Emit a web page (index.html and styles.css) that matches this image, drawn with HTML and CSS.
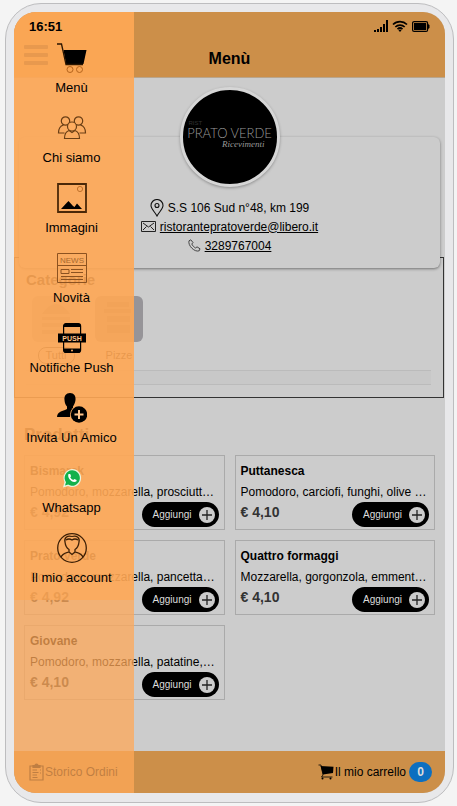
FILE: index.html
```
<!DOCTYPE html>
<html lang="it">
<head>
  <meta charset="UTF-8" />
  <meta name="viewport" content="width=device-width, initial-scale=1.0"/>
  <title>Menù</title>
  <link rel="stylesheet" href="styles.css">
</head>
<body>
  <div class="phone">
    <div class="screen">

      <header class="topbar">
        <div class="status">
          <span>16:51</span>
          <div class="status-icons">
            <svg width="14" height="12" viewBox="0 0 14 12"><path d="M0 10h2v2H0zM3 9h2v3H3zM6 7h2v5H6zM9 4h2v8H9zM12 0h2v12h-2z"/></svg>
            <svg width="16" height="12" viewBox="0 0 16 12"><path d="M1 4.500a10 10 0 0 1 14 0M3.300 7a6.700 6.700 0 0 1 9.400 0M5.500 9.200a3.600 3.600 0 0 1 5 0" fill="none" stroke="#000" stroke-width="1.700"/><path d="M6.500 10.200a2.200 2.200 0 0 1 3 0L8 12z"/></svg>
            <svg width="18" height="12" viewBox="0 0 18 12"><rect x=".6" y="1.600" width="15" height="9.800" rx="1.500" fill="none" stroke="#000" stroke-width="1.200"/><path d="M2 3h12.200v7H2zM16 4l1.500 1v3L16 9z"/></svg>
          </div>
        </div>
        <div class="title-row">
          <button class="hamburger" aria-label="Apri menu">
            <span></span><span></span><span></span>
          </button>
          <h1>Menù</h1>
        </div>
      </header>

      <main>
        <section class="info">
          <div class="logo">
            <span class="logo-top">RIST</span>
            <span class="logo-name">PRATO VERDE</span>
            <span class="logo-sub">Ricevimenti</span>
          </div>
          <p class="contact">
            <svg width="14" height="18" viewBox="0 0 14 18" fill="none" stroke="#111" stroke-width="1.100"><path d="M7 17C5 13 1 10 1 6.500a6 6 0 0 1 12 0C13 10 9 13 7 17z"/><circle cx="7" cy="6.500" r="2"/></svg>
            S.S 106 Sud n°48, km 199
          </p>
          <p class="contact">
            <svg width="15" height="11" viewBox="0 0 15 11" fill="none" stroke="#222"><path d="M.5.5h14v10H.5zM2 2l5.500 4L13 2M2 9l3.500-3.500M13 9L9.500 5.500"/></svg>
            <a href="mailto:ristorantepratoverde@libero.it">ristorantepratoverde@libero.it</a>
          </p>
          <p class="contact">
            <svg width="13" height="13" viewBox="0 0 13 13" fill="none" stroke="#444"><path d="M1 1.800L2.800.8 5 3.500 3.800 5c.6 1.600 2.200 3.200 3.900 4L9 7.800l3 2-.8 2C6.500 13.500-.3 6.500 1 1.800z"/></svg>
            <a href="tel:3289767004">3289767004</a>
          </p>
        </section>

        <section class="categories">
          <h2>Categorie</h2>
          <div class="category-list">
            <button class="category selected">
              <svg width="48" height="46" viewBox="0 0 48 46"><rect width="48" height="46" rx="6" fill="#aaa"/><path d="M10 18q14-20 28 0zM10 21h28v3H10zM10 27h28v4H10zM10 34h28v4H10z" fill="#888"/></svg>
              <span>Tutti</span>
            </button>
            <button class="category">
              <svg width="48" height="46" viewBox="0 0 48 46"><rect width="48" height="46" rx="6" fill="#969498"/><path d="M12 6h22v5H12zM9 13h27v4H9zM12 20h23v6H12zM12 29h23v8H12z" fill="#777"/></svg>
              <span>Pizze</span>
            </button>
          </div>
          <div class="category-strip"></div>
        </section>

        <section class="products">
          <h2>Prodotti</h2>
          <div class="product-grid">
            <article class="product">
              <h3>Bismarck</h3>
              <p>Pomodoro, mozzarella, prosciutto cotto, uovo</p>
              <div class="buy">
                <strong>€ 4,92</strong>
                <button class="add">Aggiungi <svg width="16" height="16" viewBox="0 0 16 16"><circle cx="8" cy="8" r="8" fill="#ccc"/><path d="M8 3v10M3 8h10" stroke="#222" stroke-width="1.300"/></svg></button>
              </div>
            </article>
            <article class="product">
              <h3>Puttanesca</h3>
              <p>Pomodoro, carciofi, funghi, olive nere, capperi</p>
              <div class="buy">
                <strong>€ 4,10</strong>
                <button class="add">Aggiungi <svg width="16" height="16" viewBox="0 0 16 16"><circle cx="8" cy="8" r="8" fill="#ccc"/><path d="M8 3v10M3 8h10" stroke="#222" stroke-width="1.300"/></svg></button>
              </div>
            </article>
            <article class="product">
              <h3>Prato verde</h3>
              <p>Pomodoro, mozzarella, pancetta, rucola</p>
              <div class="buy">
                <strong>€ 4,92</strong>
                <button class="add">Aggiungi <svg width="16" height="16" viewBox="0 0 16 16"><circle cx="8" cy="8" r="8" fill="#ccc"/><path d="M8 3v10M3 8h10" stroke="#222" stroke-width="1.300"/></svg></button>
              </div>
            </article>
            <article class="product">
              <h3>Quattro formaggi</h3>
              <p>Mozzarella, gorgonzola, emmental, grana</p>
              <div class="buy">
                <strong>€ 4,10</strong>
                <button class="add">Aggiungi <svg width="16" height="16" viewBox="0 0 16 16"><circle cx="8" cy="8" r="8" fill="#ccc"/><path d="M8 3v10M3 8h10" stroke="#222" stroke-width="1.300"/></svg></button>
              </div>
            </article>
            <article class="product">
              <h3>Giovane</h3>
              <p>Pomodoro, mozzarella, patatine, wurstel</p>
              <div class="buy">
                <strong>€ 4,10</strong>
                <button class="add">Aggiungi <svg width="16" height="16" viewBox="0 0 16 16"><circle cx="8" cy="8" r="8" fill="#ccc"/><path d="M8 3v10M3 8h10" stroke="#222" stroke-width="1.300"/></svg></button>
              </div>
            </article>
          </div>
        </section>
      </main>

      <footer class="bottombar">
        <a href="#ordini">
          <svg width="15" height="18" viewBox="0 0 15 18" fill="none" stroke="#000" stroke-width="1.200"><path d="M4 3H1v14h13V3h-3M3.500 7H8M3.500 9.500h6M3.500 12H8M3.500 14.500h5M11 7h1M11 10h1"/><path d="M4 4.500V2.500h2C6 .5 9 .5 9 2.500h2v2z" fill="#000"/></svg>
          Storico Ordini
        </a>
        <a href="#carrello">
          <svg width="16" height="16" viewBox="0 0 16 16"><path d="M2.500 2l13 .8-.5 6.200L5 10.500z"/><path d="M.5 1H3l2 10-1.500 2h11" fill="none" stroke="#000" stroke-width=".8"/><circle cx="4.500" cy="14.500" r="1"/><circle cx="12.500" cy="14.500" r="1"/></svg>
          Il mio carrello
          <span class="badge">0</span>
        </a>
      </footer>

      <!-- Menu laterale -->
      <nav class="drawer">
        <ul>
          <li><a href="#menu">
            <svg width="30" height="30" viewBox="0 0 30 30"><path d="M6.500 7h23L26.500 21H9z"/><path d="M0 1h4.500L9 21.500h17" fill="none" stroke="#2a1500" stroke-width="1.300"/><g fill="none" stroke="#b5651d"><circle cx="13" cy="26.500" r="3"/><circle cx="22.500" cy="26.500" r="3"/></g></svg>
            Menù
          </a></li>
          <li><a href="#chi-siamo">
            <svg width="30" height="30" viewBox="0 0 30 30" fill="none" stroke="#6b3f15" stroke-width="1.200"><circle cx="8.500" cy="8" r="4.200"/><circle cx="21.500" cy="8" r="4.200"/><path d="M6.500 12C3 13 1.500 16 1.500 20h6M23.500 12c3.500 1 5 4 5 8h-6"/><circle cx="15" cy="13.500" r="4.500" fill="#ffad60"/><path d="M12 17.500c-3 1-4.500 4-4.500 8h15c0-4-1.500-7-4.500-8l-3 2z"/></svg>
            Chi siamo
          </a></li>
          <li><a href="#immagini">
            <svg width="30" height="30" viewBox="0 0 30 30"><path d="M1 1h28v28H1z" fill="none" stroke="#4a2808" stroke-width="1.800"/><path d="M4 26l6-6.500 1.500-1.500 4.500 5 1.500 1 2.500-3.500 5 5.500z"/><circle cx="23" cy="6" r="2.600" fill="none" stroke="#c0722c"/></svg>
            Immagini
          </a></li>
          <li><a href="#novita">
            <svg width="30" height="30" viewBox="0 0 30 30" fill="none" stroke="#8c5220"><path d="M.5.500h29v29H.5zM.5 12.500h29M4 16.500h8v4H4zM14 16.500h12M14 19.500h12M4 23.500h22M4 26.500h22"/><text x="15" y="10" font-size="8" text-anchor="middle" fill="#a8692e" stroke="none">NEWS</text></svg>
            Novità
          </a></li>
          <li><a href="#notifiche">
            <svg width="30" height="30" viewBox="0 0 30 30"><rect x="6.600" y=".6" width="17" height="28.800" rx="2.500" fill="none" stroke="#000" stroke-width="1.200"/><path d="M6.500 4V2.500q0-2 2-2h13q2 0 2 2V4zM6.500 25.500h17v2q0 2-2 2h-13q-2 0-2-2zM1 10.500h28v9H1z"/><circle cx="15" cy="27.500" r="1" fill="#ffad60"/><text x="15" y="17.800" font-size="7" font-weight="bold" text-anchor="middle" fill="#ffc48a">PUSH</text></svg>
            Notifiche Push
          </a></li>
          <li><a href="#invita">
            <svg width="30" height="30" viewBox="0 0 30 30"><path d="M13 0c4 0 6 3 5.500 7-.3 3-1.500 5-2.500 6.500v3L13 24H0c.5-5 4-5.500 8-7l2-1v-2.500C8.500 12 7.700 10 7.500 7 7 3 9 0 13 0z"/><circle cx="22" cy="21.500" r="9" fill="#ffad60"/><circle cx="22" cy="21.500" r="8.200"/><path d="M22 17v9M17.500 21.500h9" stroke="#ffc48a" stroke-width="2"/></svg>
            Invita Un Amico
          </a></li>
          <li><a href="#whatsapp">
            <svg width="30" height="30" viewBox="0 0 30 30"><path d="M15 6a9 9 0 1 1-4 17l-5 1.500L7.500 19A9 9 0 0 1 15 6z" fill="#e9f5df"/><path d="M15 7.300a7.700 7.700 0 1 1-3.800 14.300L8 22.500l1-3.200A7.700 7.700 0 0 1 15 7.300z" fill="#12b14b"/><path d="M11.500 11l1.700.1.900 2.100-.9 1.100c.7 1.300 1.700 2.200 3 2.800l1.200-1.200 2.200 1-.1 1.300c-3.500 3-9.800-3-8-7.200z" fill="#fff"/></svg>
            Whatsapp
          </a></li>
          <li><a href="#account">
            <svg width="30" height="30" viewBox="0 0 30 30" fill="none" stroke="#3d2006" stroke-width="1.300"><circle cx="15" cy="15" r="14.300"/><path d="M15 3.500c5-1.500 8 1.500 7 5.500-.3 3-1.500 6-4 7.500v2.500c3 1 7 1.500 8 5.500M15 3.500C10 2 7 5 8 9c.3 3 1.500 6 4 7.500V19c-3 1-7 1.500-8 5.500M9 7q3-2 6 0 3-2 6 0M12 19l3 2.500 3-2.500"/></svg>
            Il mio account
          </a></li>
        </ul>
      </nav>
    </div>
  </div>
</body>
</html>
```
FILE: styles.css
```
* {
  box-sizing: border-box;
}

body {
  margin: 0;
  background-color: #f4f4f4;
  font-family: "Liberation Sans", Arial, Helvetica, sans-serif;
  font-size: 12px;
  color: #000;
}

h1, h2, h3, p, ul {
  margin: 0;
  padding: 0;
}

button {
  font-family: inherit;
  border: none;
  padding: 0;
  background: none;
  cursor: pointer;
}

a {
  color: inherit;
}

svg {
  display: block;
  flex: none;
}

.phone {
  display: flex;
  min-height: calc(100vh - 6px);
  margin: 3px 3px 3px 5px;
  padding: 8px 8px 9px;
  border: 1px solid #bdbdbf;
  border-radius: 36px;
  background-color: #e8e8ea;
}

.screen {
  position: relative;
  flex: 1;
  min-width: 0;
  display: flex;
  flex-direction: column;
  overflow: hidden;
  border-radius: 22px;
  background-color: #ccc;
}

/* Barra superiore */
.topbar {
  background-color: #cc8f49;
  border-bottom: 1px solid #b9a58c;
}

.status {
  position: relative;
  z-index: 3;
  display: flex;
  justify-content: space-between;
  align-items: center;
  height: 28px;
  padding: 0 15px;
  font-size: 13px;
  font-weight: bold;
}

.status-icons {
  display: flex;
  gap: 4px;
}

.title-row {
  display: grid;
  grid-template-columns: 24px 1fr 24px;
  align-items: center;
  height: 37px;
  padding: 0 10px;
}

.title-row h1 {
  font-size: 16px;
  text-align: center;
}

.hamburger {
  display: grid;
  gap: 4px;
  padding-bottom: 8px;
}

.hamburger span {
  height: 4px;
  border-radius: 1px;
  background-color: #111;
}

main {
  flex: 1;
  padding-top: 59px;
}

/* Scheda ristorante */
.info {
  position: relative;
  z-index: 1;
  display: flex;
  flex-direction: column;
  align-items: center;
  height: 131px;
  margin: 0 5px;
  border-radius: 6px;
  background-color: #ccc;
  box-shadow: 0 1px 3px rgba(0, 0, 0, 0.45);
}

.logo {
  display: flex;
  flex-direction: column;
  justify-content: center;
  align-items: center;
  width: 100px;
  height: 100px;
  margin: -50px 0 11px;
  padding-bottom: 6px;
  border: 3px solid #d6d6d6;
  border-radius: 50%;
  background-color: #000;
  box-shadow: 0 1px 3px rgba(0, 0, 0, 0.3);
  color: #999;
  white-space: nowrap;
}

.logo-top {
  align-self: flex-start;
  margin-left: 6px;
  font-size: 6px;
  color: #333;
}

.logo-name {
  font-family: Lato, sans-serif;
  font-weight: 300;
  font-size: 13px;
  line-height: 14px;
}

.logo-sub {
  align-self: flex-end;
  margin-right: 12px;
  font-family: "Liberation Serif", serif;
  font-style: italic;
  font-size: 9px;
  line-height: 8px;
}

.contact {
  display: flex;
  align-items: center;
  gap: 4px;
  height: 19px;
}

/* Categorie */
.categories {
  height: 141px;
  margin: -11px 1px 0 0;
  padding: 13px 12px 0 11px;
  border: 1px solid #333;
}

.categories h2 {
  font-size: 15px;
  line-height: 18px;
}

.category-list {
  display: flex;
  gap: 15px;
  padding: 7px 6px 6px;
}

.category {
  display: flex;
  flex-direction: column;
  align-items: center;
  gap: 5px;
  width: 48px;
  font-size: 11px;
}

.category span {
  padding: 0 7px;
  border: 1px solid transparent;
  border-radius: 8px;
  line-height: 15px;
}

.category.selected span {
  border-color: #333;
}

.category-strip {
  height: 15px;
  border: 1px solid #bbb;
  border-width: 1px 0;
  background-color: #c8c8c8;
}

/* Prodotti */
.products {
  padding: 27px 10px 50px;
}

.products h2 {
  font-size: 17px;
  line-height: 20px;
}

.product-grid {
  display: grid;
  grid-template-columns: repeat(2, minmax(0, 1fr));
  gap: 10px;
  margin-top: 10px;
}

.product {
  height: 75px;
  padding: 5px 5px 3px;
  border: 1px solid #aaa;
}

.product h3 {
  font-size: 12px;
  line-height: 21px;
}

.product p {
  padding-right: 1px;
  line-height: 20px;
  overflow: hidden;
  text-overflow: ellipsis;
  white-space: nowrap;
}

.buy {
  display: flex;
  justify-content: space-between;
}

.buy strong {
  font-size: 14px;
  line-height: 21px;
  color: #333;
}

.add {
  display: flex;
  align-items: center;
  gap: 7px;
  height: 25px;
  padding: 0 4px 0 11px;
  border-radius: 13px;
  background-color: #000;
  color: #ddd;
  font-size: 10px;
}

/* Barra inferiore */
.bottombar {
  display: flex;
  justify-content: space-between;
  align-items: center;
  height: 42px;
  padding: 0 13px 0 15px;
  background-color: #cc8f49;
}

.bottombar a {
  display: flex;
  align-items: center;
  gap: 1px;
  text-decoration: none;
}

.badge {
  width: 23px;
  margin-left: 2px;
  border-radius: 10px;
  background-color: #0d6fc0;
  color: #ddd;
  font-weight: bold;
  line-height: 20px;
  text-align: center;
}

/* Menu laterale */
.drawer {
  position: absolute;
  z-index: 2;
  top: 0;
  bottom: 0;
  left: 0;
  width: 120px;
  background-color: rgba(255, 168, 88, 0.75);
}

.drawer ul {
  display: grid;
  gap: 15px;
  padding: 31px 5px 12px 0;
  background-color: rgba(255, 168, 84, 0.62);
  list-style: none;
}

.drawer a {
  display: flex;
  flex-direction: column;
  align-items: center;
  gap: 5px;
  font-size: 13px;
  line-height: 20px;
  text-decoration: none;
  white-space: nowrap;
}
```
